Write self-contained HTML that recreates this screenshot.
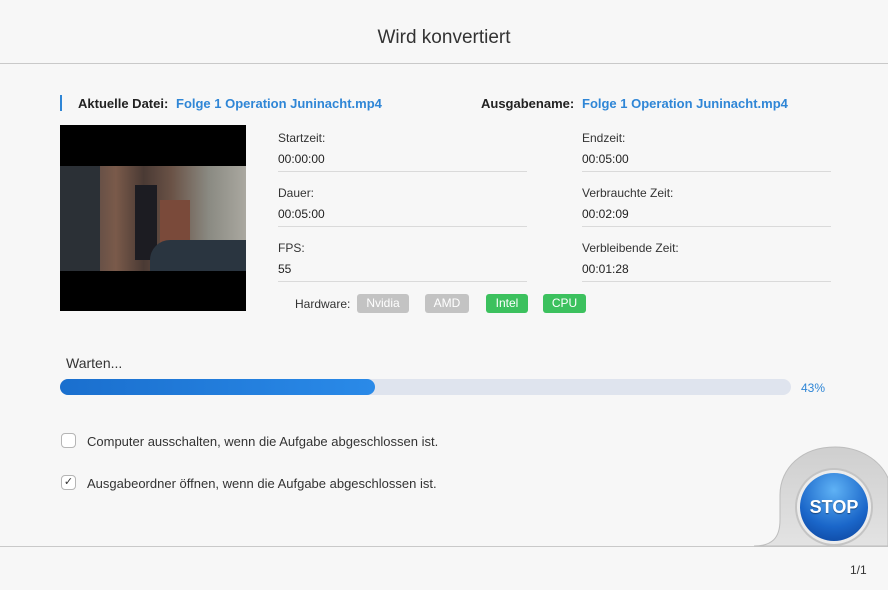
<!DOCTYPE html>
<html><head><meta charset="utf-8"><style>
*{margin:0;padding:0;box-sizing:border-box}
body{width:888px;height:590px;background:#f7f7f7;font-family:"Liberation Sans",Arial,sans-serif;position:relative;overflow:hidden;color:#333}
.abs{position:absolute}
.title{top:0;left:0;width:888px;height:64px;line-height:76px;text-align:center;font-size:19px;color:#333;border-bottom:1px solid #c9c9c9}
.lbl{font-size:12px;color:#333}
.val{font-size:12px;color:#222}
.line{height:1px;background:#dadada;width:249px}
.badge{font-size:12px;color:#fff;height:19px;line-height:19px;text-align:center;border-radius:3px}
</style></head><body>
<div class="abs title">Wird konvertiert</div>

<div class="abs" style="left:60px;top:95px;width:2px;height:16px;background:#2f86d6"></div>
<div class="abs" style="left:78px;top:96px;font-size:13px;font-weight:bold;color:#222">Aktuelle Datei:</div>
<div class="abs" style="left:176px;top:96px;font-size:13px;font-weight:bold;color:#2f86d6">Folge 1 Operation Juninacht.mp4</div>
<div class="abs" style="left:481px;top:96px;font-size:13px;font-weight:bold;color:#222">Ausgabename:</div>
<div class="abs" style="left:582px;top:96px;font-size:13px;font-weight:bold;color:#2f86d6">Folge 1 Operation Juninacht.mp4</div>

<div class="abs" style="left:60px;top:125px;width:186px;height:186px;background:#000;overflow:hidden">
 <div class="abs" style="left:0;top:41px;width:186px;height:105px;background:linear-gradient(90deg,#3a3f45 0%,#5a4a44 15%,#7a5a4a 30%,#4a3a34 45%,#6a5246 60%,#8a8a82 80%,#aaa8a0 100%)"></div>
 <div class="abs" style="left:0;top:41px;width:40px;height:105px;background:#2b3036"></div>
 <div class="abs" style="left:75px;top:60px;width:22px;height:75px;background:#1c1c22"></div>
 <div class="abs" style="left:100px;top:75px;width:30px;height:60px;background:#7a4a3a"></div>
 <div class="abs" style="left:90px;top:115px;width:96px;height:31px;background:#2a3540;border-radius:20px 0 0 0"></div>
</div>

<div class="abs lbl" style="left:278px;top:131px">Startzeit:</div>
<div class="abs val" style="left:278px;top:152px">00:00:00</div>
<div class="abs line" style="left:278px;top:171px"></div>
<div class="abs lbl" style="left:278px;top:186px">Dauer:</div>
<div class="abs val" style="left:278px;top:207px">00:05:00</div>
<div class="abs line" style="left:278px;top:226px"></div>
<div class="abs lbl" style="left:278px;top:241px">FPS:</div>
<div class="abs val" style="left:278px;top:262px">55</div>
<div class="abs line" style="left:278px;top:281px"></div>

<div class="abs lbl" style="left:582px;top:131px">Endzeit:</div>
<div class="abs val" style="left:582px;top:152px">00:05:00</div>
<div class="abs line" style="left:582px;top:171px"></div>
<div class="abs lbl" style="left:582px;top:186px">Verbrauchte Zeit:</div>
<div class="abs val" style="left:582px;top:207px">00:02:09</div>
<div class="abs line" style="left:582px;top:226px"></div>
<div class="abs lbl" style="left:582px;top:241px">Verbleibende Zeit:</div>
<div class="abs val" style="left:582px;top:262px">00:01:28</div>
<div class="abs line" style="left:582px;top:281px"></div>

<div class="abs lbl" style="left:295px;top:297px">Hardware:</div>
<div class="abs badge" style="left:357px;top:294px;width:52px;background:#c3c3c3">Nvidia</div>
<div class="abs badge" style="left:425px;top:294px;width:44px;background:#c3c3c3">AMD</div>
<div class="abs badge" style="left:486px;top:294px;width:42px;background:#3cc15e">Intel</div>
<div class="abs badge" style="left:543px;top:294px;width:43px;background:#3cc15e">CPU</div>

<div class="abs" style="left:66px;top:355px;font-size:14px;color:#333">Warten...</div>
<div class="abs" style="left:60px;top:379px;width:731px;height:16px;border-radius:8px;background:#dfe4ee"></div>
<div class="abs" style="left:60px;top:379px;width:315px;height:16px;border-radius:8px;background:linear-gradient(90deg,#1a6fce,#2a8ae8)"></div>
<div class="abs" style="left:801px;top:381px;font-size:12px;color:#2f86d6">43%</div>

<div class="abs" style="left:61px;top:433px;width:15px;height:15px;border:1px solid #b5b5b5;border-radius:4px;background:#fff"></div>
<div class="abs" style="left:87px;top:434px;font-size:13px;color:#333">Computer ausschalten, wenn die Aufgabe abgeschlossen ist.</div>
<div class="abs" style="left:61px;top:475px;width:15px;height:15px;border:1px solid #b5b5b5;border-radius:4px;background:#fff;font-size:11px;line-height:13px;text-align:center;color:#333">✓</div>
<div class="abs" style="left:87px;top:476px;font-size:13px;color:#333">Ausgabeordner öffnen, wenn die Aufgabe abgeschlossen ist.</div>

<div class="abs" style="left:0;top:546px;width:888px;height:1px;background:#c9c9c9"></div>
<svg class="abs" style="left:740px;top:440px" width="148" height="107" viewBox="0 0 148 107">
 <defs><linearGradient id="m" x1="0" y1="0" x2="0" y2="1"><stop offset="0" stop-color="#cfcfcf"/><stop offset="1" stop-color="#e3e3e3"/></linearGradient></defs>
 <path d="M14,106 C32,106 40,98 40,80 L40,55 C40,28 62,7 95,7 C120,7 140,20 148,38 L148,106 Z" fill="url(#m)" stroke="#bdbdbd" stroke-width="1"/>
</svg>
<div class="abs" style="left:795px;top:468px;width:78px;height:78px;border-radius:50%;background:#c4c4c4"></div>
<div class="abs" style="left:797px;top:470px;width:74px;height:74px;border-radius:50%;background:#ececec"></div>
<div class="abs" style="left:800px;top:473px;width:68px;height:68px;border-radius:50%;background:radial-gradient(circle at 50% 25%,#5fb2f5,#1a66c9 60%,#0b3f96);text-align:center;line-height:68px;font-size:18px;font-weight:bold;color:#fff;text-shadow:0 1px 1px rgba(0,0,0,.4)">STOP</div>
<div class="abs" style="left:850px;top:563px;font-size:12px;color:#333">1/1</div>
</body></html>
